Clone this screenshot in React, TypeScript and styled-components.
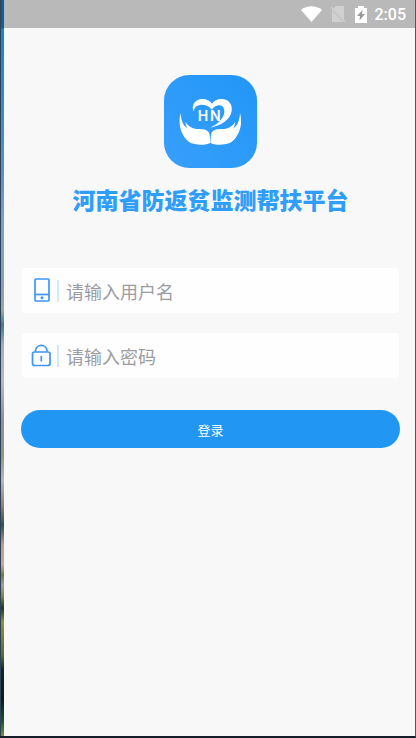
import React, { useState } from "react";
import styled, { createGlobalStyle } from "styled-components";

const sans = `"Roboto", "Noto Sans CJK SC", sans-serif`;

const GlobalStyle = createGlobalStyle`
  * { box-sizing: border-box; }
  html, body { margin: 0; padding: 0; }
  body { background: #f8f8f8; font-family: ${sans}; }
`;

const Desktop = styled.div`
  display: grid;
  grid-template-columns: 4px 1fr;
  min-height: 100vh;
  border-right: 1px solid #55565a;
  border-bottom: 2px solid #151c2a;
`;

const Wallpaper = styled.div`
  border-left: 1px solid #30425a;
  background: linear-gradient(
    to bottom,
    #05629a 0, #05629a 28px, #1089cb 29px, #2a8cc8 90px, #5a91c4 170px,
    #7ba3c8 230px, #8d9fb5 290px, #9aab98 310px, #417a92 325px, #a3aeb4 345px,
    #b9b9bf 380px, #8f9098 420px, #8c9a78 455px, #b9b5b6 480px, #98836f 505px,
    #2f5347 525px, #c39a8a 545px, #c9a891 565px, #6f7f35 575px, #a99a9c 585px,
    #7d8440 597px, #1d3b18 608px, #8b9632 622px, #56702a 655px, #0d2a1c 670px,
    #0a1c1c 700px, #1d5a22 722px, #7d9130 736px
  );
`;

const Screen = styled.div`
  display: flex;
  flex-direction: column;
  min-width: 0;
  background: #f8f8f8;
`;

const StatusBar = styled.header`
  display: flex;
  align-items: center;
  justify-content: flex-end;
  height: 28px;
  padding: 2px 9px 0 0;
  background: #b9b9b9;
  color: #fff;
`;

const StatusIcon = styled.svg<{ $gap: number }>`
  display: block;
  height: 18px;
  margin-right: ${(p) => p.$gap}px;
`;

const Clock = styled.time`
  font: 500 16px/20px ${sans};
`;

const Main = styled.main`
  display: flex;
  flex-direction: column;
  align-items: center;
  padding: 47px 15px 0 17px;
`;

const Logo = styled.svg`
  display: block;
  width: 93px;
  height: 93px;
`;

const Title = styled.h1`
  margin: 13px 0 0;
  color: #2f9dfa;
  font: 900 23px/36px "Noto Sans CJK SC", sans-serif;
  white-space: nowrap;
`;

const Form = styled.form`
  display: flex;
  flex-direction: column;
  gap: 20px;
  width: 100%;
  margin-top: 51px;
`;

const Field = styled.label`
  display: flex;
  align-items: center;
  height: 45px;
  margin: 0 1px;
  padding-left: 8px;
  border-radius: 4px;
  background: #fefefe;
`;

const FieldIcon = styled.svg`
  flex: none;
  width: 22px;
  height: 26px;
  fill: none;
  stroke: #3b97f7;
  stroke-width: 1.7;
`;

const Divider = styled.span`
  flex: none;
  width: 2px;
  height: 22px;
  margin: 0 7px 0 5px;
  background: #d3e8fd;
`;

const Input = styled.input`
  flex: 1;
  min-width: 0;
  height: 100%;
  padding: 0;
  border: 0;
  outline: 0;
  background: transparent;
  color: #333;
  font: 400 18px/26px "Noto Sans CJK SC", sans-serif;
  &::placeholder { color: #9b9da2; opacity: 1; }
`;

const LoginButton = styled.button`
  height: 38px;
  margin-top: 12px;
  padding: 2px 0 0;
  border: 0;
  border-radius: 19px;
  background: #2196f3;
  color: #fff;
  font: 400 13px/20px "Noto Sans CJK SC", sans-serif;
  cursor: pointer;
`;

function Hand() {
  return (
    <path
      fill="#fff"
      d="M93 143C94 161 98 177 109 186C120 194 124 201 136 206C144 209 152 209 158 210C149 214 131 211 121 200C112 190 109 182 107 170C115 182 126 190 140 191C157 191 176 190 180 208C181 216 181 225 182 232C170 240 143 240 126 234C104 225 81 187 93 143Z"
    />
  );
}

function BrandLogo() {
  return (
    <Logo viewBox="43 29 279 279" role="img" aria-label="HN">
      <defs>
        <linearGradient id="brand" x1="1" y1="0" x2="0" y2="1">
          <stop offset="0" stopColor="#2196f6" />
          <stop offset="1" stopColor="#389ffc" />
        </linearGradient>
      </defs>
      <rect x="43" y="29" width="279" height="279" rx="76" fill="url(#brand)" />
      <path
        fill="#fff"
        d="M132 139C123 119 138 101 158 101C171 101 181 107 187 115C193 105 205 100 219 101C239 103 249 119 246 137C242 164 213 182 181 187C204 177 222 160 224 141C225 127 217 119 207 120C197 121 191 127 187 133C179 122 168 118 155 118C141 119 133 126 132 139Z"
      />
      <text y="168" fill="#fff" fontFamily="Inter, sans-serif" fontSize="42" fontWeight="600">
        <tspan x="144">H</tspan>
        <tspan x="181">N</tspan>
      </text>
      <Hand />
      <g transform="translate(364 0) scale(-1 1)">
        <Hand />
      </g>
    </Logo>
  );
}

export default function App() {
  const [user, setUser] = useState("");
  const [password, setPassword] = useState("");

  return (
    <>
      <GlobalStyle />
      <Desktop>
        <Wallpaper />
        <Screen>
          <StatusBar>
            <StatusIcon $gap={8} width="21" viewBox="0 0 21 18" aria-hidden="true">
              <path fill="#fff" d="M0 4C6 -1 15 -1 21 4L10.500 16Z" />
            </StatusIcon>
            <StatusIcon $gap={9} width="16" viewBox="0 0 16 18" aria-hidden="true">
              <path fill="#d0d0d0" d="M6 0H14V14L3 3ZM2 4L13 16H2Z" />
              <path stroke="#d0d0d0" strokeWidth="1.500" d="M1 1L15 16" />
            </StatusIcon>
            <StatusIcon $gap={8} width="12" viewBox="0 0 12 18" aria-hidden="true">
              <path fill="#fff" d="M3 0H9V2H12V17H0V2H3Z" />
              <path fill="#999" d="M7.500 4L2 10H5L4.500 14.500L10 8H7Z" />
            </StatusIcon>
            <Clock>2:05</Clock>
          </StatusBar>
          <Main>
            <BrandLogo />
            <Title>河南省防返贫监测帮扶平台</Title>
            <Form onSubmit={(e) => e.preventDefault()}>
              <Field>
                <FieldIcon viewBox="0 0 22 26" aria-hidden="true">
                  <rect x="5" y="1" width="14" height="22" rx="1" />
                  <path d="M5 16.500H19" />
                  <circle cx="12" cy="19.800" r="1.500" fill="#3b97f7" stroke="none" />
                </FieldIcon>
                <Divider />
                <Input
                  type="text"
                  aria-label="用户名"
                  placeholder="请输入用户名"
                  value={user}
                  onChange={(e) => setUser(e.target.value)}
                />
              </Field>
              <Field>
                <FieldIcon viewBox="0 0 22 26" aria-hidden="true">
                  <rect x="2.500" y="9" width="17.500" height="13.500" rx="2" />
                  <path d="M5.500 9V7.500A5.800 5.800 0 0 1 17 7.500V9M11.300 13V18.500" />
                </FieldIcon>
                <Divider />
                <Input
                  type="password"
                  aria-label="密码"
                  placeholder="请输入密码"
                  value={password}
                  onChange={(e) => setPassword(e.target.value)}
                />
              </Field>
              <LoginButton type="submit">登录</LoginButton>
            </Form>
          </Main>
        </Screen>
      </Desktop>
    </>
  );
}
